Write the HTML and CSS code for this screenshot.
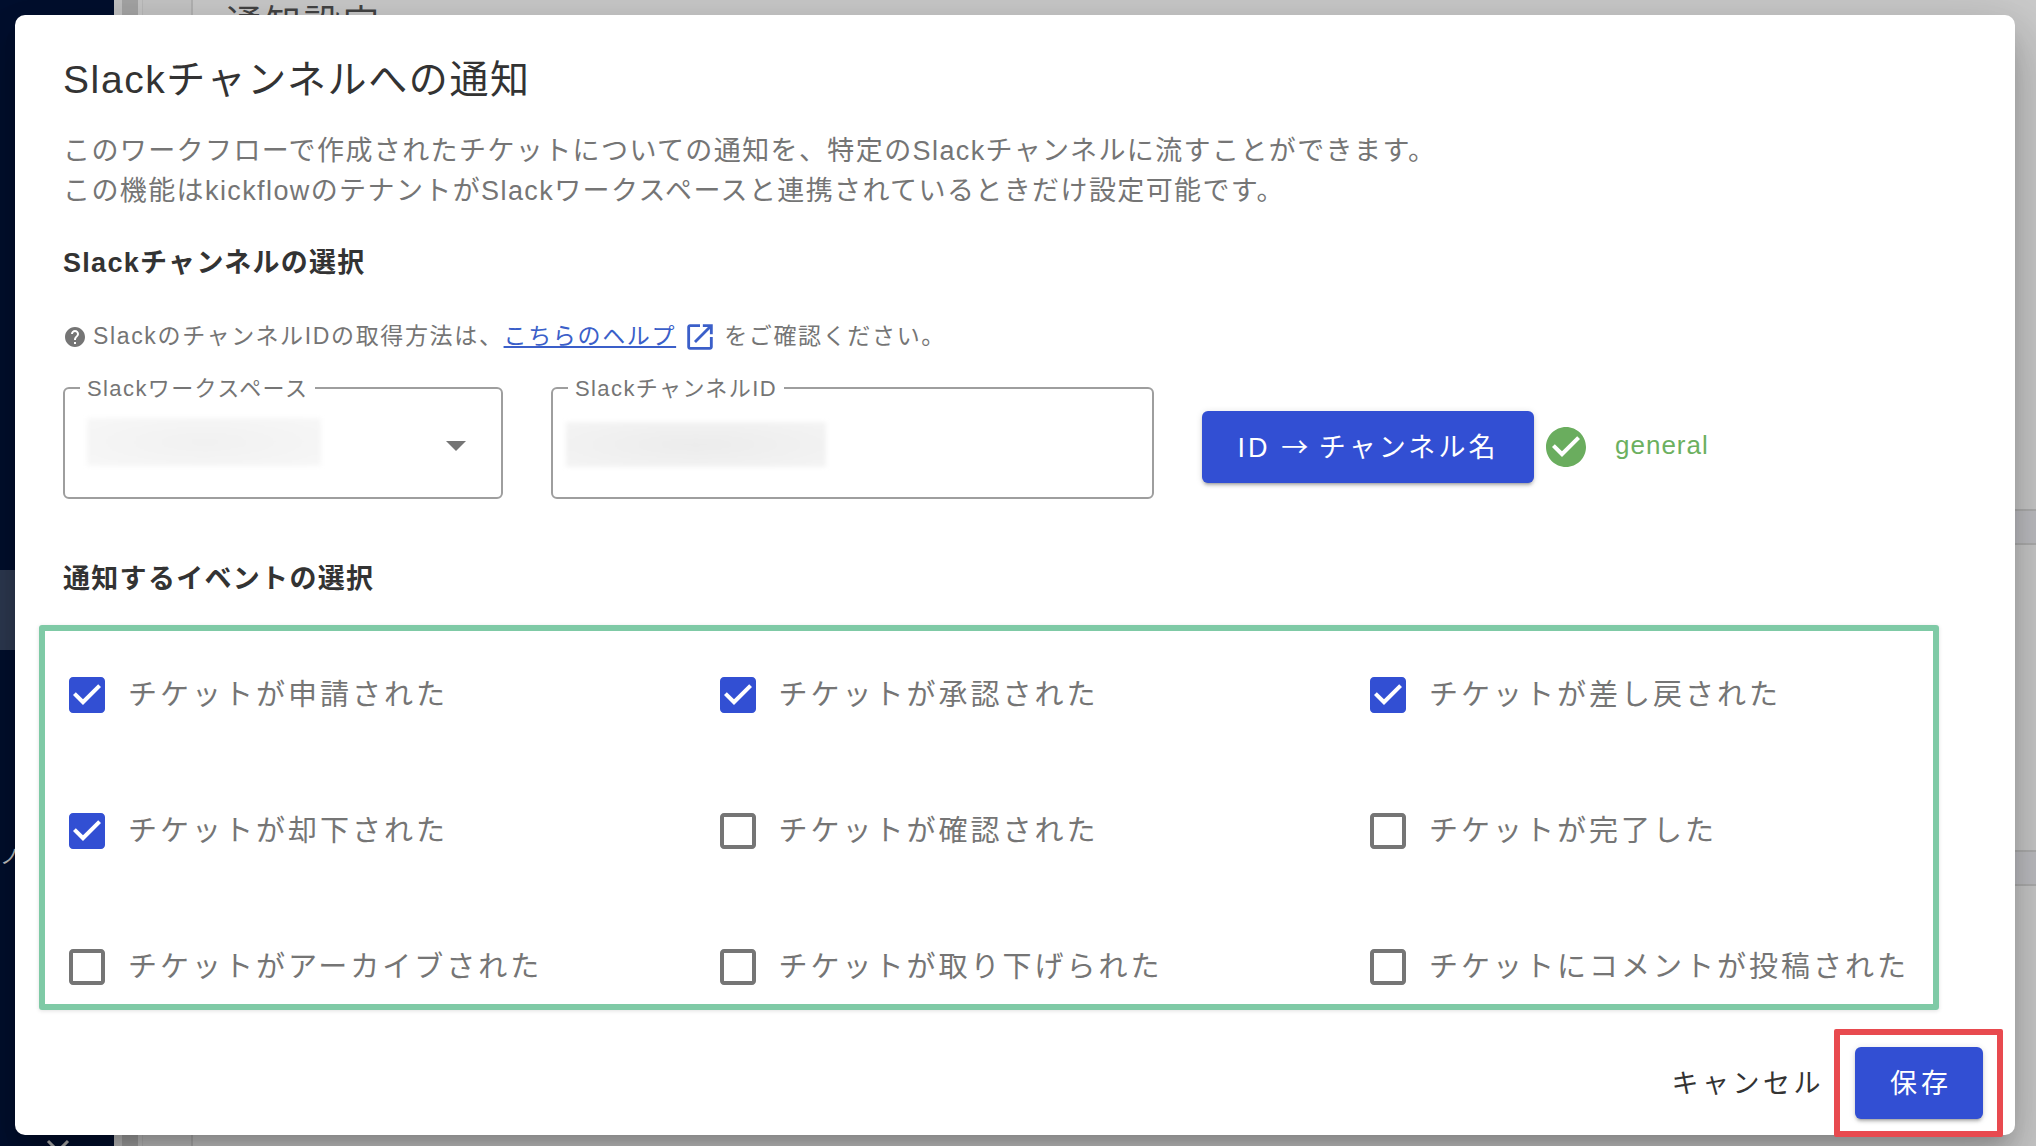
FILE: index.html
```html
<!DOCTYPE html>
<html lang="ja">
<head>
<meta charset="utf-8">
<title>Slackチャンネルへの通知</title>
<link rel="stylesheet" href="styles.css">
</head>
<body>
<div class="page">
  <aside class="sidebar">
    <div class="side-active"></div>
    <div class="side-glyph">ノ</div>
    <svg class="side-x" viewBox="0 0 24 24"><path d="M2 2 L22 22 M22 2 L2 22"/></svg>
  </aside>
  <div class="strip"></div>
  <div class="track"></div>
  <div class="strip-thin"></div>
  <div class="subcol"></div>
  <main class="main">
    <div class="main-title">通知設定</div>
    <div class="main-band band-one"></div>
    <div class="main-band band-two"></div>
  </main>
</div>

<section class="dialog">
  <h2 class="dialog-title">Slackチャンネルへの通知</h2>
  <p class="intro">このワークフローで作成されたチケットについての通知を、特定のSlackチャンネルに流すことができます。<br>この機能はkickflowのテナントがSlackワークスペースと連携されているときだけ設定可能です。</p>
  <h3 class="section-title first">Slackチャンネルの選択</h3>
  <div class="help">
    <svg class="help-icon" viewBox="0 0 24 24"><path d="M12 2C6.48 2 2 6.48 2 12s4.48 10 10 10 10-4.48 10-10S17.52 2 12 2zm1 17h-2v-2h2v2zm2.07-7.75l-.9.92C13.45 12.9 13 13.5 13 15h-2v-.5c0-1.1.45-2.1 1.17-2.83l1.24-1.26c.37-.36.59-.86.59-1.41 0-1.1-.9-2-2-2s-2 .9-2 2H8c0-2.21 1.79-4 4-4s4 1.79 4 4c0 .88-.36 1.68-.93 2.25z"/></svg>
    <span class="help-text">SlackのチャンネルIDの取得方法は、</span>
    <a class="help-link" href="#">こちらのヘルプ</a>
    <svg class="ext-icon" viewBox="0 0 24 24"><path d="M19 19H5V5h7V3H5c-1.11 0-2 .9-2 2v14c0 1.1.89 2 2 2h14c1.1 0 2-.9 2-2v-7h-2v7zM14 3v2h3.59l-9.83 9.83 1.41 1.41L19 6.41V10h2V3h-7z"/></svg>
    <span class="help-text">をご確認ください。</span>
  </div>
  <div class="fields">
    <div class="field field-select">
      <span class="field-label">Slackワークスペース</span>
      <div class="masked masked-select"></div>
      <div class="arrow"></div>
    </div>
    <div class="field field-id">
      <span class="field-label">SlackチャンネルID</span>
      <div class="masked masked-id"></div>
    </div>
    <div class="lookup">
      <button class="btn btn-lookup">ID <span class="arrow-char">→</span> チャンネル名</button>
      <svg class="ok-icon" viewBox="0 0 24 24"><circle cx="12" cy="12" r="7" fill="#fff"/><path d="M12 2C6.48 2 2 6.48 2 12s4.48 10 10 10 10-4.48 10-10S17.52 2 12 2zm-2 15l-5-5 1.41-1.41L10 14.17l7.59-7.59L19 8l-9 9z"/></svg>
      <span class="ok-text">general</span>
    </div>
  </div>
  <h3 class="section-title second">通知するイベントの選択</h3>
  <div class="events">
    <label class="event"><svg class="cb on" viewBox="0 0 24 24"><path d="M19 3H5c-1.11 0-2 .9-2 2v14c0 1.1.89 2 2 2h14c1.11 0 2-.9 2-2V5c0-1.1-.89-2-2-2zm-9 14l-5-5 1.41-1.41L10 14.17l7.59-7.59L19 8l-9 9z"/></svg><span class="event-text">チケットが申請された</span></label>
    <label class="event"><svg class="cb on" viewBox="0 0 24 24"><path d="M19 3H5c-1.11 0-2 .9-2 2v14c0 1.1.89 2 2 2h14c1.11 0 2-.9 2-2V5c0-1.1-.89-2-2-2zm-9 14l-5-5 1.41-1.41L10 14.17l7.59-7.59L19 8l-9 9z"/></svg><span class="event-text">チケットが承認された</span></label>
    <label class="event"><svg class="cb on" viewBox="0 0 24 24"><path d="M19 3H5c-1.11 0-2 .9-2 2v14c0 1.1.89 2 2 2h14c1.11 0 2-.9 2-2V5c0-1.1-.89-2-2-2zm-9 14l-5-5 1.41-1.41L10 14.17l7.59-7.59L19 8l-9 9z"/></svg><span class="event-text">チケットが差し戻された</span></label>
    <label class="event"><svg class="cb on" viewBox="0 0 24 24"><path d="M19 3H5c-1.11 0-2 .9-2 2v14c0 1.1.89 2 2 2h14c1.11 0 2-.9 2-2V5c0-1.1-.89-2-2-2zm-9 14l-5-5 1.41-1.41L10 14.17l7.59-7.59L19 8l-9 9z"/></svg><span class="event-text">チケットが却下された</span></label>
    <label class="event"><svg class="cb" viewBox="0 0 24 24"><path d="M19 5v14H5V5h14m0-2H5c-1.1 0-2 .9-2 2v14c0 1.1.9 2 2 2h14c1.1 0 2-.9 2-2V5c0-1.1-.9-2-2-2z"/></svg><span class="event-text">チケットが確認された</span></label>
    <label class="event"><svg class="cb" viewBox="0 0 24 24"><path d="M19 5v14H5V5h14m0-2H5c-1.1 0-2 .9-2 2v14c0 1.1.9 2 2 2h14c1.1 0 2-.9 2-2V5c0-1.1-.9-2-2-2z"/></svg><span class="event-text">チケットが完了した</span></label>
    <label class="event"><svg class="cb" viewBox="0 0 24 24"><path d="M19 5v14H5V5h14m0-2H5c-1.1 0-2 .9-2 2v14c0 1.1.9 2 2 2h14c1.1 0 2-.9 2-2V5c0-1.1-.9-2-2-2z"/></svg><span class="event-text">チケットがアーカイブされた</span></label>
    <label class="event"><svg class="cb" viewBox="0 0 24 24"><path d="M19 5v14H5V5h14m0-2H5c-1.1 0-2 .9-2 2v14c0 1.1.9 2 2 2h14c1.1 0 2-.9 2-2V5c0-1.1-.9-2-2-2z"/></svg><span class="event-text">チケットが取り下げられた</span></label>
    <label class="event"><svg class="cb" viewBox="0 0 24 24"><path d="M19 5v14H5V5h14m0-2H5c-1.1 0-2 .9-2 2v14c0 1.1.9 2 2 2h14c1.1 0 2-.9 2-2V5c0-1.1-.9-2-2-2z"/></svg><span class="event-text">チケットにコメントが投稿された</span></label>
  </div>
  <div class="footer">
    <button class="btn-text">キャンセル</button>
    <button class="btn btn-save">保存</button>
  </div>
  <div class="save-mark"></div>
</section>
</body>
</html>
```
FILE: styles.css
```css
* { box-sizing: border-box; }
html, body { margin: 0; height: 100%; overflow: hidden; }
body {
  font-family: "Liberation Sans", "Noto Sans CJK JP", sans-serif;
  background: #cbcbcb;
  color: #333;
}
.page { display: flex; height: 1146px; }
.sidebar {
  width: 114px;
  flex: none;
  background: #000f2e;
  display: flex;
  flex-direction: column;
  color: #c4c4c4;
}
.side-active { width: 100%; height: 80px; margin-top: 570px; background: #2e3a52; flex: none; }
.side-glyph { font-size: 20px; line-height: 30px; margin-top: 192px; height: 30px; width: 15px; flex: none; }
.side-x { width: 24px; height: 24px; margin-top: 267px; margin-left: 46px; flex: none; fill: none; stroke: #b4b4b4; stroke-width: 3; }
.strip { width: 8px; flex: none; background: #c4c4c4; }
.track { width: 16px; flex: none; background: #a6a6a6; }
.strip-thin { width: 4px; flex: none; background: #c8c8c8; }
.subcol { width: 51px; flex: none; background: #c6c6c6; border-left: 1px solid #bbb; border-right: 2px solid #b4b4b4; }
.main { flex: 1; display: flex; flex-direction: column; }
.main-title { font-size: 36px; line-height: 40px; margin: 4px 0 0 33px; color: #444; letter-spacing: 3px; }
.main-band { height: 36px; border-top: 2px solid #b0b0b0; border-bottom: 2px solid #b0b0b0; background: #c0c0c4; }
.band-one { margin-top: 465px; }
.band-two { margin-top: 305px; }

.dialog {
  position: absolute;
  left: 15px;
  top: 15px;
  width: 2000px;
  height: 1120px;
  background: #fff;
  border-radius: 10px;
  padding: 35px 48px 16px;
  display: flex;
  flex-direction: column;
  box-shadow: 0 14px 20px -9px rgba(0,0,0,.2), 0 31px 49px 4px rgba(0,0,0,.14), 0 12px 60px 10px rgba(0,0,0,.12);
}
.dialog-title { margin: 0; font-size: 39px; line-height: 60px; font-weight: 400; letter-spacing: 1.6px; color: #333; }
.intro { margin: 21px 0 0; font-size: 27px; line-height: 40px; color: #757575; letter-spacing: 1.4px; }
.section-title { margin: 0; font-size: 27px; line-height: 36px; font-weight: 700; color: #333; letter-spacing: 1.3px; }
.section-title.first { margin-top: 34px; }
.section-title.second { margin-top: 62px; }

.help { display: flex; align-items: center; height: 36px; margin-top: 35px; margin-bottom: 1px; font-size: 23px; color: #757575; letter-spacing: 1.65px; }
.help-icon { width: 24px; height: 24px; margin: 6px 6px 0 0; fill: #757575; flex: none; }
.help-link { color: #3b5fc9; text-decoration: underline; }
.ext-icon { width: 34px; height: 34px; margin: 5px 7px 0 7px; fill: #3b5fc9; flex: none; }

.fields { display: flex; align-items: flex-start; margin-top: 34px; height: 112px; }
.field { position: relative; height: 112px; border: 2px solid #9e9e9e; border-radius: 6px; display: flex; align-items: flex-start; }
.field-select { width: 440px; padding-left: 22px; }
.field-id { width: 603px; margin-left: 48px; padding-left: 13px; }
.field-label {
  position: absolute;
  left: 15px;
  top: -14px;
  padding: 0 7px;
  background: #fff;
  font-size: 22px;
  line-height: 28px;
  color: #757575;
  letter-spacing: 1.4px;
}
.masked { filter: blur(2px); }
.masked-select { width: 234px; height: 48px; margin-top: 29px; background: radial-gradient(ellipse at center, #f1f1f1, #f7f7f7); }
.masked-id { width: 260px; height: 45px; margin-top: 33px; background: radial-gradient(ellipse at center, #ececec, #f4f4f4); }
.arrow { width: 0; height: 0; margin: 52px 35px 0 auto; border-left: 10px solid transparent; border-right: 10px solid transparent; border-top: 10px solid #757575; }

.lookup { display: flex; align-items: center; margin: 24px 0 0 48px; }
.btn {
  border: 0;
  border-radius: 6px;
  background: #324fd3;
  color: #fff;
  font-family: inherit;
  font-size: 27px;
  height: 72px;
  padding: 0 0 4px;
  box-shadow: 0 4px 2px -3px rgba(0,0,0,.2), 0 3px 3px 0 rgba(0,0,0,.14), 0 1px 7px 0 rgba(0,0,0,.12);
}
.btn-lookup { width: 332px; letter-spacing: 3.1px; }
.arrow-char { font-family: "Noto Sans CJK JP", sans-serif; letter-spacing: 0; }
.ok-icon { width: 48px; height: 48px; margin-left: 8px; fill: #6aad5e; flex: none; }
.ok-text { margin: -4px 0 0 25px; font-size: 26px; color: #6cb05f; letter-spacing: 1px; }

.events {
  margin: 28px 0 0 -24px;
  width: 1900px;
  height: 385px;
  border: 6px solid #7fcaa6;
  border-radius: 3px;
  padding: 36px 0 0 24px;
  display: grid;
  grid-template-columns: repeat(3, 650.5px);
  grid-auto-rows: 56px;
  row-gap: 80px;
  box-shadow: 0 1px 4px rgba(0,0,0,.12);
}
.event { display: flex; align-items: center; font-size: 29px; color: #757575; letter-spacing: 3px; white-space: nowrap; }
.event-text { margin-bottom: 6px; }
.cb { width: 48px; height: 48px; margin: 0 17px 0 -6px; fill: #757575; flex: none; }
.cb.on { fill: #324fd3; }

.footer { display: flex; align-items: center; justify-content: flex-end; margin: 37px -16px 0 0; }
.btn-text { border: 0; background: none; padding: 0 0 4px; font-family: inherit; font-size: 27px; letter-spacing: 3.5px; color: #333; margin-right: 31px; }
.btn-save { width: 128px; letter-spacing: 4px; padding-left: 4px; }
.save-mark {
  position: absolute;
  left: 1819px;
  top: 1014px;
  width: 169px;
  height: 108px;
  border: 6px solid #e84a4f;
  border-radius: 2px;
}
```
